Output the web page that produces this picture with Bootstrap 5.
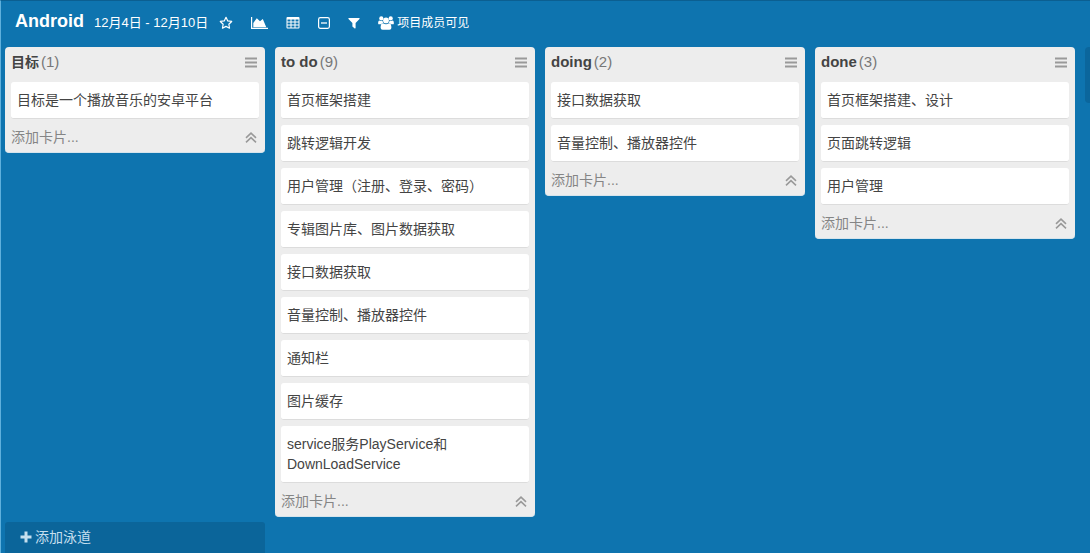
<!DOCTYPE html>
<html lang="zh-CN">
<head>
<meta charset="utf-8">
<meta name="viewport" content="width=device-width, initial-scale=1">
<title>Android</title>
<link href="https://cdn.jsdelivr.net/npm/bootstrap@5.3.0/dist/css/bootstrap.min.css" rel="stylesheet">
<script src="https://cdn.jsdelivr.net/npm/bootstrap@5.3.0/dist/js/bootstrap.bundle.min.js" defer></script>
<style>
body{background:#0e74af;color:#444;font:14px/20px "Liberation Sans","Noto Sans CJK SC",sans-serif;border-top:1px solid #0b5f91;border-left:1px solid #5fb0dc}
svg{display:block;flex:none}
.topbar{height:46px;padding:0 14px 2px}
.topbar h1{font-size:18px;line-height:24px;padding-bottom:4px;margin:0 10px 0 0}
.topbar .btn{--bs-btn-color:#fff;--bs-btn-hover-color:#cde;line-height:20px}
.dates{font-size:13px;margin-right:11px}
.members{font-size:12px;gap:3px}
.tools{gap:18px}
.board{gap:10px;padding:0 4px}
.lane{flex:0 0 260px;background:#ededed;border-radius:4px;padding:5px 6px;border-bottom:1px solid #d5e4ec}
.lane-head{height:20px;margin-bottom:10px}
.lane-head h2{font-size:15px;line-height:20px;font-weight:700;margin:0 2px 0 0}
.lane-head h2:lang(zh){font-size:14px}
.amount{font-size:15px;color:#777}
.lane .btn{color:#858585;font-size:14px;line-height:20px}
.lane .icon-btn{color:#999;padding:0 2px}
.task{background:#fff;border-radius:3px;padding:8px 6px;border-bottom:1px solid #dcdcdc}
.tasks{gap:6px}
.lane-foot{margin-top:8px}
.new-lane{flex:0 0 260px;height:56px;background:#0b669c;border-radius:4px}
.add-row{width:260px;height:31px;margin-left:4px;padding:0 15px 2px;background:#0b659a;color:#c5dfee;border-radius:3px 3px 0 0;font-size:14px;line-height:20px;gap:3px}
.add-row:hover{background:#095682;color:#fff}
</style>
</head>
<body class="d-flex flex-column min-vh-100">
<svg width="0" height="0" class="d-none" aria-hidden="true">
<symbol id="bars" viewBox="0 0 12 11"><path d="M0 1.5h12M0 5.5h12M0 9.5h12" stroke="currentColor" stroke-width="1.8"/></symbol>
<symbol id="up" viewBox="0 0 12 12"><path d="M1 6.8l5-4.6 5 4.6M1 11.3l5-4.6 5 4.6" fill="none" stroke="currentColor" stroke-width="1.6"/></symbol>
</svg>
<header class="topbar d-flex align-items-center text-white text-nowrap">
<h1 class="fw-bold">Android</h1>
<span class="dates">12月4日 - 12月10日</span>
<nav class="tools d-flex align-items-center" aria-label="项目工具">
<button class="btn p-0 border-0" aria-label="收藏"><svg width="14" height="14" viewBox="0 0 14 14"><path d="M7 1.3l1.75 3.6 3.95.55-2.85 2.8.68 3.95L7 10.35 3.47 12.2l.68-3.95L1.3 5.45l3.95-.55z" fill="none" stroke="currentColor" stroke-width="1.2" stroke-linejoin="round"/></svg></button>
<button class="btn p-0 border-0" aria-label="统计"><svg width="17" height="14" viewBox="0 0 17 14"><path d="M.6 1v11.4H17" fill="none" stroke="currentColor" stroke-width="1.2"/><path d="M2.3 11.2V7L5.8 2.2l3.2 3 2.8-2.1 3.5 8.1z" fill="currentColor"/></svg></button>
<button class="btn p-0 border-0" aria-label="表格"><svg width="14" height="14" viewBox="0 0 14 14"><path fill-rule="evenodd" fill="currentColor" d="M1.5 1h11q1 0 1 1v9.5q0 1-1 1h-11q-1 0-1-1V2q0-1 1-1zM1.5 3.5v2h3v-2zm4 0v2h3v-2zm4 0v2h3v-2zm-8 3v2h3v-2zm4 0v2h3v-2zm4 0v2h3v-2zm-8 3v2h3v-2zm4 0v2h3v-2zm4 0v2h3v-2z"/></svg></button>
<button class="btn p-0 border-0" aria-label="折叠"><svg width="12" height="14" viewBox="0 0 12 14"><rect x=".6" y="1.6" width="10.8" height="10.8" rx="1.8" fill="none" stroke="currentColor" stroke-width="1.2"/><path d="M3 7h6" stroke="currentColor" stroke-width="1.3"/></svg></button>
<button class="btn p-0 border-0" aria-label="筛选"><svg width="12" height="14" viewBox="0 0 12 14"><path d="M.8 2h10.4q.7.3.3.9L7.6 7v5.1q-.2.8-.9.3L4.4 10.5V7L.5 2.9Q.1 2.3.8 2z" fill="currentColor"/></svg></button>
<button class="members btn p-0 border-0 d-flex align-items-center"><svg width="16" height="14" viewBox="0 0 16 14" fill="currentColor"><circle cx="3.3" cy="2.4" r="2.1"/><circle cx="12.7" cy="2.4" r="2.1"/><circle cx="8" cy="4.4" r="2.9"/><path d="M.2 7.9C0 5.7.4 4.4 1.5 4.4q1.6.9 3.1.3Q4.5 6.2 5.3 7 3.9 7 3.1 8.2H1Q.4 8.2.2 7.9zM15.8 7.9c.2-2.2-.2-3.5-1.3-3.5q-1.6.9-3.1.3.1 1.5-.7 2.3 1.4 0 2.2 1.2H15q.6 0 .8-.3zM5 7.3q3 2 6 0c1.8.1 2.4 2 2.4 4.4q0 2.1-2 2.1H4.6q-2 0-2-2.1C2.6 9.3 3.2 7.4 5 7.3z"/></svg>项目成员可见</button>
</nav>
</header>
<main class="board d-flex align-items-start overflow-hidden">
<section class="lane">
<div class="lane-head d-flex align-items-center"><h2>目标</h2><span class="amount">(1)</span><button class="btn icon-btn border-0 ms-auto" aria-label="菜单"><svg width="12" height="11"><use href="#bars"/></svg></button></div>
<div class="tasks d-flex flex-column"><article class="task">目标是一个播放音乐的安卓平台</article></div>
<div class="lane-foot d-flex align-items-center"><button class="btn p-0 border-0">添加卡片...</button><button class="btn icon-btn border-0 ms-auto" aria-label="收起"><svg width="12" height="12"><use href="#up"/></svg></button></div>
</section>
<section class="lane">
<div class="lane-head d-flex align-items-center"><h2 lang="en">to do</h2><span class="amount">(9)</span><button class="btn icon-btn border-0 ms-auto" aria-label="菜单"><svg width="12" height="11"><use href="#bars"/></svg></button></div>
<div class="tasks d-flex flex-column">
<article class="task">首页框架搭建</article>
<article class="task">跳转逻辑开发</article>
<article class="task">用户管理（注册、登录、密码）</article>
<article class="task">专辑图片库、图片数据获取</article>
<article class="task">接口数据获取</article>
<article class="task">音量控制、播放器控件</article>
<article class="task">通知栏</article>
<article class="task">图片缓存</article>
<article class="task">service服务PlayService和DownLoadService</article>
</div>
<div class="lane-foot d-flex align-items-center"><button class="btn p-0 border-0">添加卡片...</button><button class="btn icon-btn border-0 ms-auto" aria-label="收起"><svg width="12" height="12"><use href="#up"/></svg></button></div>
</section>
<section class="lane">
<div class="lane-head d-flex align-items-center"><h2 lang="en">doing</h2><span class="amount">(2)</span><button class="btn icon-btn border-0 ms-auto" aria-label="菜单"><svg width="12" height="11"><use href="#bars"/></svg></button></div>
<div class="tasks d-flex flex-column">
<article class="task">接口数据获取</article>
<article class="task">音量控制、播放器控件</article>
</div>
<div class="lane-foot d-flex align-items-center"><button class="btn p-0 border-0">添加卡片...</button><button class="btn icon-btn border-0 ms-auto" aria-label="收起"><svg width="12" height="12"><use href="#up"/></svg></button></div>
</section>
<section class="lane">
<div class="lane-head d-flex align-items-center"><h2 lang="en">done</h2><span class="amount">(3)</span><button class="btn icon-btn border-0 ms-auto" aria-label="菜单"><svg width="12" height="11"><use href="#bars"/></svg></button></div>
<div class="tasks d-flex flex-column">
<article class="task">首页框架搭建、设计</article>
<article class="task">页面跳转逻辑</article>
<article class="task">用户管理</article>
</div>
<div class="lane-foot d-flex align-items-center"><button class="btn p-0 border-0">添加卡片...</button><button class="btn icon-btn border-0 ms-auto" aria-label="收起"><svg width="12" height="12"><use href="#up"/></svg></button></div>
</section>
<div class="new-lane"></div>
</main>
<button class="add-row btn border-0 d-flex align-items-center mt-auto"><svg width="12" height="12" viewBox="0 0 12 12"><path d="M6 .5v11M.5 6h11" stroke="currentColor" stroke-width="3"/></svg>添加泳道</button>
</body>
</html>
